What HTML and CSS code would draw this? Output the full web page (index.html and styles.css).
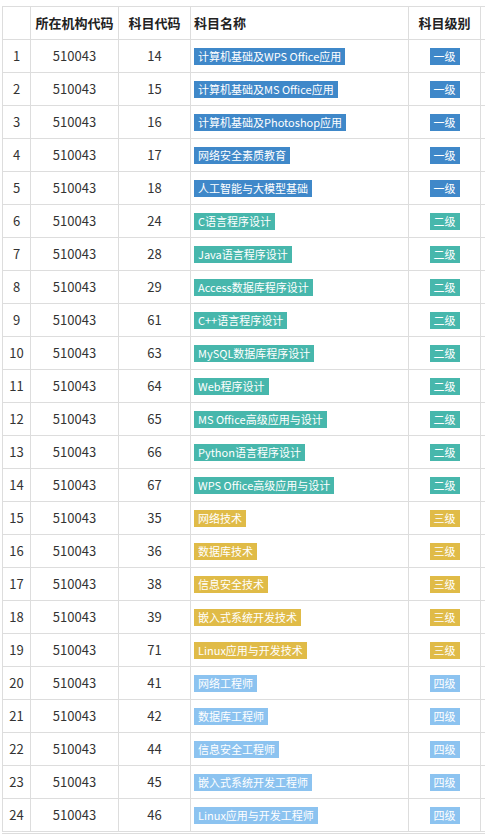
FILE: index.html
```html
<!DOCTYPE html>
<html lang="zh">
<head>
<meta charset="utf-8">
<link rel="stylesheet" href="styles.css">
</head>
<body>
<div class="wrap">
<table class="grid">
<colgroup>
<col class="c-idx"><col class="c-org"><col class="c-code"><col class="c-name"><col class="c-lvl"><col class="c-extra">
</colgroup>
<thead>
<tr><th></th><th>所在机构代码</th><th>科目代码</th><th class="left">科目名称</th><th>科目级别</th><th></th></tr>
</thead>
<tbody>
<tr><td>1</td><td>510043</td><td>14</td><td class="left"><span class="tag l1">计算机基础及WPS Office应用</span></td><td><span class="tag l1">一级</span></td><td></td></tr>
<tr><td>2</td><td>510043</td><td>15</td><td class="left"><span class="tag l1">计算机基础及MS Office应用</span></td><td><span class="tag l1">一级</span></td><td></td></tr>
<tr><td>3</td><td>510043</td><td>16</td><td class="left"><span class="tag l1">计算机基础及Photoshop应用</span></td><td><span class="tag l1">一级</span></td><td></td></tr>
<tr><td>4</td><td>510043</td><td>17</td><td class="left"><span class="tag l1">网络安全素质教育</span></td><td><span class="tag l1">一级</span></td><td></td></tr>
<tr><td>5</td><td>510043</td><td>18</td><td class="left"><span class="tag l1">人工智能与大模型基础</span></td><td><span class="tag l1">一级</span></td><td></td></tr>
<tr><td>6</td><td>510043</td><td>24</td><td class="left"><span class="tag l2">C语言程序设计</span></td><td><span class="tag l2">二级</span></td><td></td></tr>
<tr><td>7</td><td>510043</td><td>28</td><td class="left"><span class="tag l2">Java语言程序设计</span></td><td><span class="tag l2">二级</span></td><td></td></tr>
<tr><td>8</td><td>510043</td><td>29</td><td class="left"><span class="tag l2">Access数据库程序设计</span></td><td><span class="tag l2">二级</span></td><td></td></tr>
<tr><td>9</td><td>510043</td><td>61</td><td class="left"><span class="tag l2">C++语言程序设计</span></td><td><span class="tag l2">二级</span></td><td></td></tr>
<tr><td>10</td><td>510043</td><td>63</td><td class="left"><span class="tag l2">MySQL数据库程序设计</span></td><td><span class="tag l2">二级</span></td><td></td></tr>
<tr><td>11</td><td>510043</td><td>64</td><td class="left"><span class="tag l2">Web程序设计</span></td><td><span class="tag l2">二级</span></td><td></td></tr>
<tr><td>12</td><td>510043</td><td>65</td><td class="left"><span class="tag l2">MS Office高级应用与设计</span></td><td><span class="tag l2">二级</span></td><td></td></tr>
<tr><td>13</td><td>510043</td><td>66</td><td class="left"><span class="tag l2">Python语言程序设计</span></td><td><span class="tag l2">二级</span></td><td></td></tr>
<tr><td>14</td><td>510043</td><td>67</td><td class="left"><span class="tag l2">WPS Office高级应用与设计</span></td><td><span class="tag l2">二级</span></td><td></td></tr>
<tr><td>15</td><td>510043</td><td>35</td><td class="left"><span class="tag l3">网络技术</span></td><td><span class="tag l3">三级</span></td><td></td></tr>
<tr><td>16</td><td>510043</td><td>36</td><td class="left"><span class="tag l3">数据库技术</span></td><td><span class="tag l3">三级</span></td><td></td></tr>
<tr><td>17</td><td>510043</td><td>38</td><td class="left"><span class="tag l3">信息安全技术</span></td><td><span class="tag l3">三级</span></td><td></td></tr>
<tr><td>18</td><td>510043</td><td>39</td><td class="left"><span class="tag l3">嵌入式系统开发技术</span></td><td><span class="tag l3">三级</span></td><td></td></tr>
<tr><td>19</td><td>510043</td><td>71</td><td class="left"><span class="tag l3">Linux应用与开发技术</span></td><td><span class="tag l3">三级</span></td><td></td></tr>
<tr><td>20</td><td>510043</td><td>41</td><td class="left"><span class="tag l4">网络工程师</span></td><td><span class="tag l4">四级</span></td><td></td></tr>
<tr><td>21</td><td>510043</td><td>42</td><td class="left"><span class="tag l4">数据库工程师</span></td><td><span class="tag l4">四级</span></td><td></td></tr>
<tr><td>22</td><td>510043</td><td>44</td><td class="left"><span class="tag l4">信息安全工程师</span></td><td><span class="tag l4">四级</span></td><td></td></tr>
<tr><td>23</td><td>510043</td><td>45</td><td class="left"><span class="tag l4">嵌入式系统开发工程师</span></td><td><span class="tag l4">四级</span></td><td></td></tr>
<tr><td>24</td><td>510043</td><td>46</td><td class="left"><span class="tag l4">Linux应用与开发工程师</span></td><td><span class="tag l4">四级</span></td><td></td></tr>
</tbody>
</table>
</div>
</body>
</html>
```
FILE: styles.css
```css
html, body {
  margin: 0;
  padding: 0;
  overflow: hidden;
  background: #fff;
}
body {
  padding: 6px 0 0 2px;
  font-family: "Noto Sans CJK SC", "Noto Sans", sans-serif;
  color: #333;
}
.wrap {
  width: 600px;
  border-bottom: 1px solid #ddd;
  padding-bottom: 1px;
}
.grid {
  border-collapse: collapse;
  table-layout: fixed;
  width: 600px;
  border: 1px solid #ddd;
}
.c-idx { width: 28px; }
.c-org { width: 88px; }
.c-code { width: 72px; }
.c-name { width: 218px; }
.c-lvl { width: 72px; }
.c-extra { width: 122px; }
.grid th, .grid td {
  border: 1px solid #ddd;
  height: 32px;
  padding: 0;
  text-align: center;
  vertical-align: middle;
  font-size: 13px;
  line-height: 18px;
  white-space: nowrap;
}
.grid th {
  font-weight: bold;
  color: #222;
}
.grid .left {
  text-align: left;
  padding-left: 3px;
}
.tag {
  display: inline-block;
  color: #fff;
  font-size: 11px;
  line-height: 17px;
  padding: 0 4px;
  vertical-align: middle;
}
.l1 { background: #3f88c9; }
.l2 { background: #47b7ac; }
.l3 { background: #e0bb47; }
.l4 { background: #8cc3f0; }
```
